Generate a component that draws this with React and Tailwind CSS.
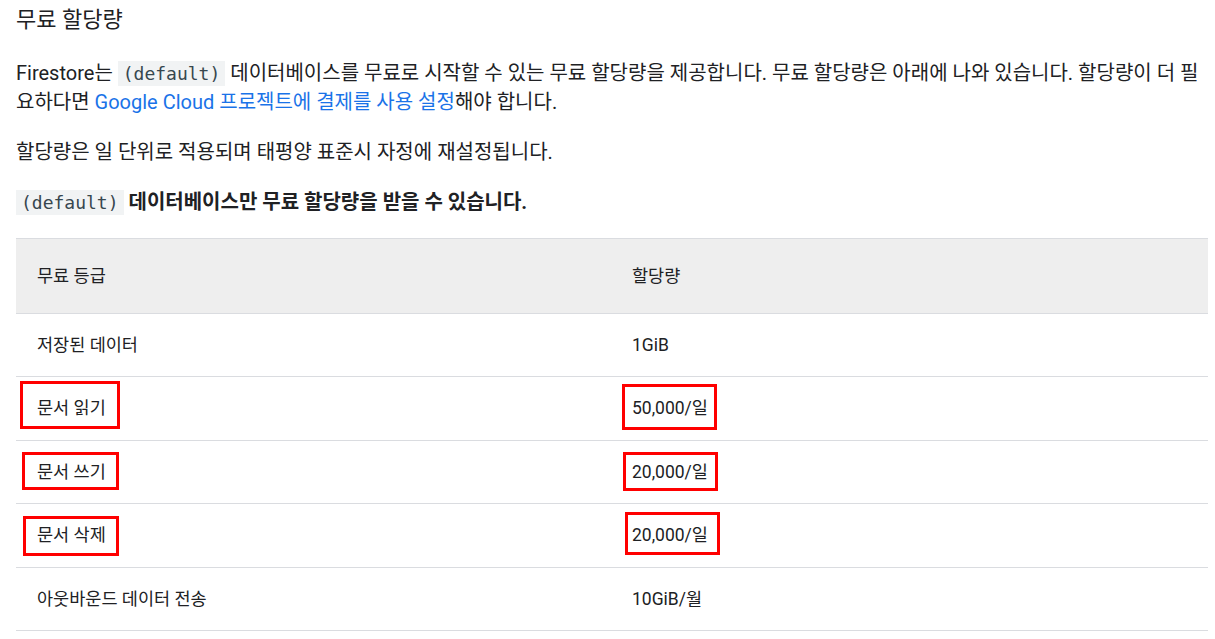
const rows = [
  { name: "저장된 데이터", quota: "1GiB" },
  {
    name: "문서 읽기",
    quota: "50,000/일",
    boxes: ["left-[4px] top-[4px] w-[100px] h-[48px]", "left-[606px] top-[7px] w-[95px] h-[46px]"],
  },
  {
    name: "문서 쓰기",
    quota: "20,000/일",
    boxes: ["left-[6px] top-[11px] w-[97px] h-[38px]", "left-[607px] top-[11px] w-[95px] h-[39px]"],
  },
  {
    name: "문서 삭제",
    quota: "20,000/일",
    boxes: ["left-[7px] top-[12px] w-[96px] h-[40px]", "left-[609px] top-[8px] w-[95px] h-[43px]"],
  },
  { name: "아웃바운드 데이터 전송", quota: "10GiB/월" },
];

const Code = ({ children }) => (
  <code className="bg-[#f1f3f4] text-[#37474f] px-[5px] py-[2px] font-['DejaVu_Sans_Mono',monospace] text-[18px] leading-[24px] font-medium">
    {children}
  </code>
);

export default function App() {
  return (
    <div className="bg-white min-h-screen pl-4 pr-[7px] pt-[3px] text-[#202124] font-[Roboto,'Noto_Sans_CJK_KR',sans-serif]">
      {/* Title */}
      <h2 className="text-[22px] leading-[34px] font-normal">무료 할당량</h2>

      <p className="mt-[22px] text-[20px] leading-[29px]">
        Firestore는 <Code>(default)</Code> 데이터베이스를 무료로 시작할 수 있는 무료 할당량을 제공합니다. 무료
        할당량은 아래에 나와 있습니다. 할당량이 더 필요하다면{" "}
        <a href="#" className="text-[#1a73e8]">
          Google Cloud 프로젝트에 결제를 사용 설정
        </a>
        해야 합니다.
      </p>

      <p className="mt-[21px] text-[20px] leading-[29px]">
        할당량은 일 단위로 적용되며 태평양 표준시 자정에 재설정됩니다.
      </p>

      <p className="mt-[21px] text-[20px] leading-[29px] font-bold">
        <Code>(default)</Code> 데이터베이스만 무료 할당량을 받을 수 있습니다.
      </p>

      {/* Quota table */}
      <div className="mt-[21px] border-t border-[#dadce0] text-[17.5px]">
        <div className="grid grid-cols-2 h-[75px] items-center bg-[#eeeeee] border-b border-[#dadce0]">
          <div className="pl-[21px]">무료 등급</div>
          <div className="pl-[20px]">할당량</div>
        </div>
        {rows.map((r) => (
          <div
            key={r.name + r.quota}
            className="relative grid grid-cols-2 h-[63.4px] items-center border-b border-[#dadce0]"
          >
            <div className="pl-[21px]">{r.name}</div>
            <div className="pl-[20px]">{r.quota}</div>
            {r.boxes &&
              r.boxes.map((b) => (
                <span key={b} className={`absolute border-[3px] border-[#ff0000] ${b}`} />
              ))}
          </div>
        ))}
      </div>
    </div>
  );
}
